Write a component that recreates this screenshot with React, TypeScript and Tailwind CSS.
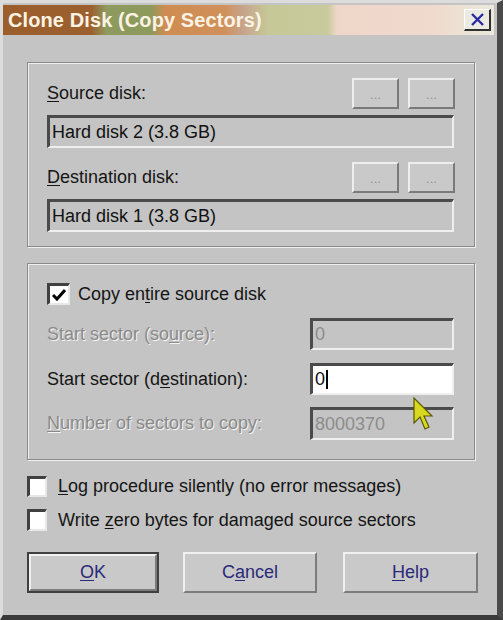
import React from 'react';

const font = { fontFamily: '"Liberation Sans", Arial, sans-serif' };

function U({ children }: { children: React.ReactNode }) {
  return <span className="underline underline-offset-2">{children}</span>;
}

function Field({ value, disabled, active, className }: { value: string; disabled?: boolean; active?: boolean; className: string }) {
  return (
    <div
      className={`flex items-center pl-[2px] border-t-[3px] border-l-[3px] border-t-[#4a4a4a] border-l-[#4a4a4a] border-b-2 border-r-2 border-b-[#efefef] border-r-[#efefef] ${
        active ? 'bg-white text-[#111]' : disabled ? 'bg-[#c4c4c4] text-[#8c8c8c]' : 'bg-[#c4c4c4] text-[#111]'
      } ${className}`}
    >
      <span>{value}</span>
      {active && <span className="w-[2px] h-[19px] bg-black ml-[1px]" />}
    </div>
  );
}

function DotButton() {
  return (
    <div className="w-[47px] h-[31px] bg-[#c9c9c9] border-t-2 border-l-2 border-t-[#eeeeee] border-l-[#eeeeee] border-b-2 border-r-2 border-b-[#7a7a7a] border-r-[#7a7a7a] flex items-center justify-center text-[#909090] text-[13px] leading-none pt-[2px]">
      ...
    </div>
  );
}

function Check({ checked, className }: { checked?: boolean; className: string }) {
  return (
    <div className={`bg-white border-t-[3px] border-l-[3px] border-t-[#404040] border-l-[#404040] border-b-2 border-r-2 border-b-[#e8e8e8] border-r-[#e8e8e8] flex items-center justify-center ${className}`}>
      {checked && (
        <svg width="14" height="12" viewBox="0 0 14 12">
          <path d="M1 6 L5 10 L13 1" fill="none" stroke="#000" strokeWidth="3" />
        </svg>
      )}
    </div>
  );
}

function Disabled({ children }: { children: React.ReactNode }) {
  return <span className="text-[#8a8a8a] [text-shadow:1px_1px_0_#f4f4f4]">{children}</span>;
}

function PushButton({ children, def, className }: { children: React.ReactNode; def?: boolean; className: string }) {
  return (
    <div className={`h-[41px] ${def ? 'border-2 border-[#404040]' : ''} ${className}`}>
      <div className="w-full h-full bg-[#c9c9c9] border-t-2 border-l-2 border-t-[#f0f0f0] border-l-[#f0f0f0] border-b-2 border-r-2 border-b-[#7c7c7c] border-r-[#7c7c7c] flex items-center justify-center text-[#2a2a7a] text-[18px]">
        {children}
      </div>
    </div>
  );
}

export default function App() {
  return (
    <div style={font} className="relative w-[503px] h-[620px] bg-[#c4c4c4] text-[18px] text-[#151515] border-t-[3px] border-l-[3px] border-t-[#dcdcdc] border-l-[#dcdcdc] border-r-[6px] border-b-[5px] border-r-[#4a4a4a] border-b-[#3a3a3a] overflow-hidden">
      <div className="mt-[2px] h-[30px] w-[491px] flex items-center justify-between pl-[5px] pr-[3px] bg-[linear-gradient(90deg,#9b5d2c_0%,#9c602f_18%,#8e9a5e_21%,#8c9a5c_30%,#cf8c52_33%,#d0905a_45%,#c6a48c_49%,#c6c898_54%,#c8ca9c_66%,#eed6c8_68%,#f0dace_88%,#e9e9dd_100%)]">
        <span className="text-[20px] font-bold text-[#fbf3e4] tracking-[0.1px]">Clone Disk (Copy Sectors)</span>
        <div className="w-[27px] h-[22px] bg-[#ecebe2] border-t border-l border-t-[#ffffff] border-l-[#ffffff] border-b-2 border-r-2 border-b-[#303030] border-r-[#303030] flex items-center justify-center">
          <svg width="15" height="13" viewBox="0 0 15 13">
            <path d="M2 1 L13 12 M13 1 L2 12" stroke="#2b2ba6" strokeWidth="2.4" />
          </svg>
        </div>
      </div>

      <div className="ml-[24px] mt-[27px] w-[448px] h-[185px] border border-[#8a8a8a] shadow-[inset_1px_1px_0_#efefef,1px_1px_0_#efefef] px-[19px] pt-[15px]">
        <div className="flex items-center justify-between h-[31px]">
          <span><U>S</U>ource disk:</span>
          <div className="flex gap-[9px]">
            <DotButton />
            <DotButton />
          </div>
        </div>
        <Field value="Hard disk 2 (3.8 GB)" className="mt-[6px] h-[33px] w-[407px]" />
        <div className="flex items-center justify-between h-[31px] mt-[14px]">
          <span><U>D</U>estination disk:</span>
          <div className="flex gap-[9px]">
            <DotButton />
            <DotButton />
          </div>
        </div>
        <Field value="Hard disk 1 (3.8 GB)" className="mt-[6px] h-[33px] w-[407px]" />
      </div>

      <div className="ml-[24px] mt-[16px] w-[448px] h-[197px] border border-[#8a8a8a] shadow-[inset_1px_1px_0_#efefef,1px_1px_0_#efefef] pl-[19px] pr-[20px] pt-[19px]">
        <div className="flex items-center gap-[8px] h-[22px]">
          <Check checked className="w-[23px] h-[22px]" />
          <span>Copy en<U>t</U>ire source disk</span>
        </div>
        <div className="flex items-center justify-between mt-[13px] h-[32px]">
          <Disabled>Start sector (so<U>u</U>rce):</Disabled>
          <Field value="0" disabled className="h-[32px] w-[144px]" />
        </div>
        <div className="flex items-center justify-between mt-[13px] h-[32px]">
          <span>Start sector (d<U>e</U>stination):</span>
          <Field value="0" active className="h-[32px] w-[144px]" />
        </div>
        <div className="flex items-center justify-between mt-[12px] h-[33px]">
          <Disabled><U>N</U>umber of sectors to copy:</Disabled>
          <Field value="8000370" disabled className="h-[33px] w-[144px]" />
        </div>
      </div>

      <div className="ml-[24px] mt-[16px] flex flex-col gap-[12px]">
        <div className="flex items-center gap-[11px] h-[21px]">
          <Check className="w-[20px] h-[21px]" />
          <span><U>L</U>og procedure silently (no error messages)</span>
        </div>
        <div className="flex items-center gap-[11px] h-[22px]">
          <Check className="w-[20px] h-[22px]" />
          <span>Write <U>z</U>ero bytes for damaged source sectors</span>
        </div>
      </div>

      <div className="ml-[24px] mt-[21px] flex">
        <PushButton def className="w-[132px]"><span><U>O</U>K</span></PushButton>
        <PushButton className="w-[134px] ml-[24px]"><span>C<U>a</U>ncel</span></PushButton>
        <PushButton className="w-[135px] ml-[26px]"><span><U>H</U>elp</span></PushButton>
      </div>

      <svg className="absolute left-[409px] top-[394px]" width="24" height="40" viewBox="0 0 24 40">
        <path d="M2 1 L2 26 L8 20 L13 32 L17 30 L12 19 L20 19 Z" fill="#d8d820" stroke="#5a5a00" strokeWidth="1.2" />
      </svg>
    </div>
  );
}
